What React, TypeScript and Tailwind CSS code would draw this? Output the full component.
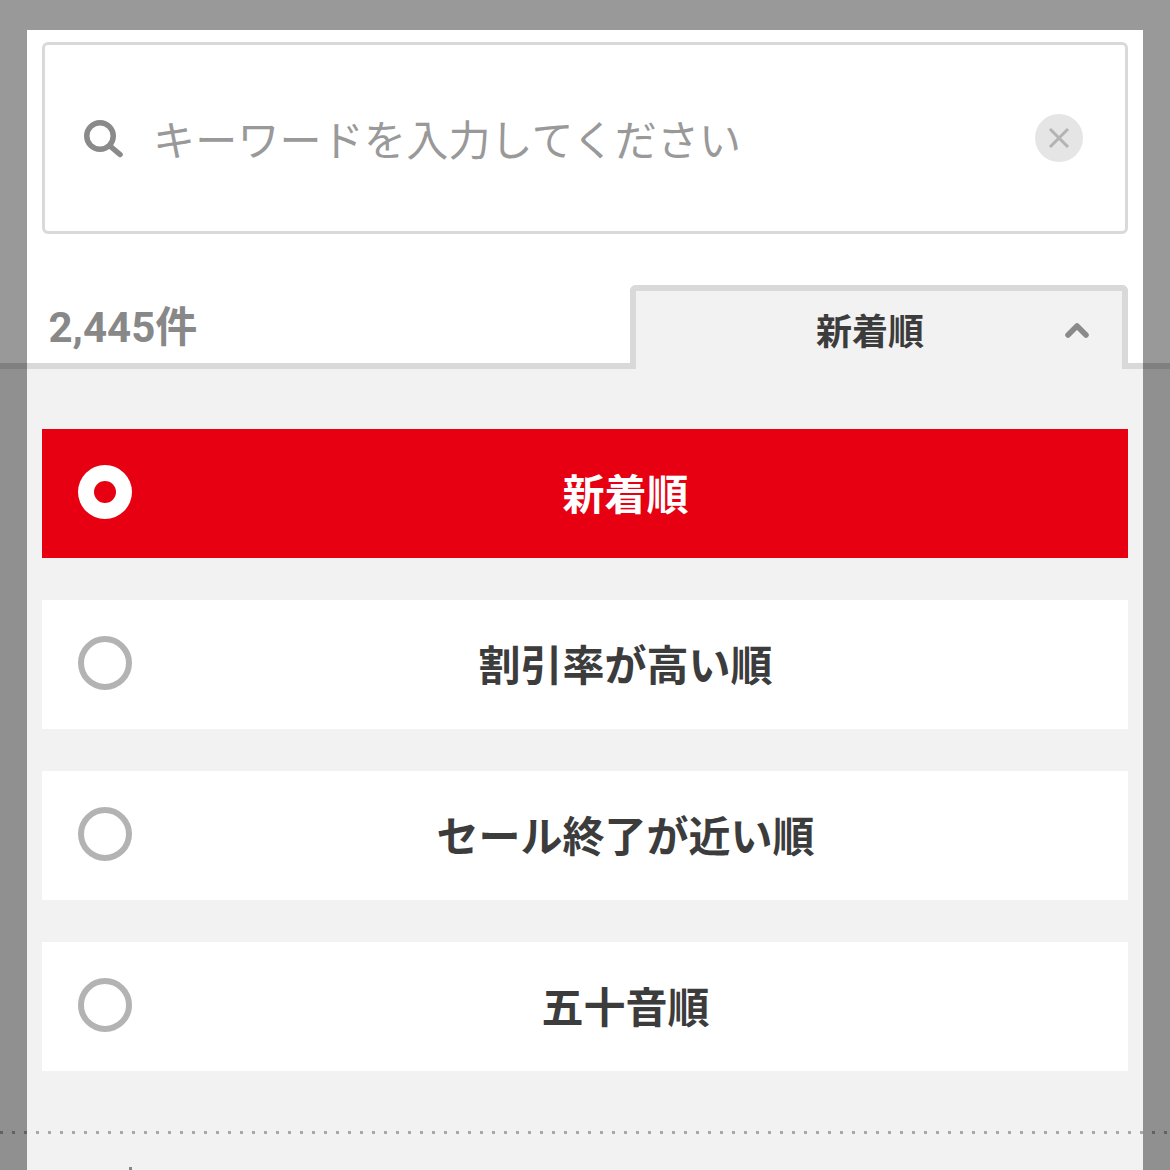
import React from 'react';

const FONT = "font-['Roboto','Noto_Sans_CJK_JP',sans-serif]";

const options = [
  { label: '新着順', selected: true },
  { label: '割引率が高い順', selected: false },
  { label: 'セール終了が近い順', selected: false },
  { label: '五十音順', selected: false },
];

const SearchIcon = () => (
  <svg width="40" height="40" viewBox="0 0 40 40" fill="none" className="shrink-0">
    <circle cx="16" cy="18" r="13.25" stroke="#8a8a8a" strokeWidth="5.5" />
    <path d="M26 28 L36 36.5" stroke="#8a8a8a" strokeWidth="5.5" strokeLinecap="round" />
  </svg>
);

const Radio = ({ selected }: { selected: boolean }) =>
  selected ? (
    <div className="w-[54px] h-[54px] rounded-full bg-white flex items-center justify-center shrink-0 ml-[36px] mr-[-10px] mt-[36px]">
      <div className="w-[22px] h-[22px] rounded-full bg-[#e60012]" />
    </div>
  ) : (
    <div className="w-[54px] h-[54px] rounded-full border-[6px] border-[#b3b3b3] bg-white shrink-0 ml-[36px] mr-[-10px] mt-[36px]" />
  );

export default function App() {
  return (
    <div className={`relative w-[1170px] h-[1170px] overflow-hidden pt-[30px] px-[27px] ${FONT}`}>
      {/* page behind the overlay */}
      <div className="absolute inset-0 flex flex-col">
        <div className="h-[363px] bg-[#999999]" />
        <div className="h-[6px] bg-[#808080]" />
        <div className="flex-1 bg-[#909090]" />
      </div>
      <div className="absolute left-0 right-0 top-[1131px] h-[3px] bg-[linear-gradient(90deg,#626262_3px,transparent_3px)] bg-size-[12px_3px]" />

      <div className="relative w-[1116px] h-[1140px] overflow-hidden bg-[#f2f2f2]">
        <div className="bg-white px-[15px] pt-[12px]">
          <div className="h-[192px] border-[3px] border-[#d9d9d9] rounded-[6px] flex items-center pl-[39px] pr-[42px]">
            <SearchIcon />
            <div className="ml-[29px] flex-1 text-[42px] leading-[60px] tracking-[0.2px] text-[#999999] pt-[8px]">キーワードを入力してください</div>
            <div className="w-[48px] h-[48px] rounded-full bg-[#e5e5e5] flex items-center justify-center">
              <svg width="22" height="22" viewBox="0 0 22 22" fill="none">
                <path d="M2 2 L20 20 M20 2 L2 20" stroke="#b3b3b3" strokeWidth="3" />
              </svg>
            </div>
          </div>
        </div>

        <div className="bg-white h-[135px] border-b-[6px] border-[#d9d9d9] pl-[21.5px] pr-[15px] flex justify-between items-end">
          <div className="text-[42px] leading-[60px] font-bold text-[#888888] mb-[5px]">2,445件</div>
          <div className="relative w-[498px] h-[84px] mb-[-6px] bg-[#f2f2f2] border-x-[6px] border-t-[6px] border-[#d9d9d9] rounded-t-[6px] flex items-center justify-center">
            <span className="text-[36px] leading-[48px] font-bold text-[#3c3c3c] mr-[18px] mt-[6px]">新着順</span>
            <svg width="26" height="20" viewBox="0 0 26 20" fill="none" className="absolute right-[32px] top-[29px]">
              <path d="M4 15 L13 6 L22 15" stroke="#8a8a8a" strokeWidth="5.5" strokeLinecap="round" strokeLinejoin="round" />
            </svg>
          </div>
        </div>

        <div className="px-[15px] pt-[60px] flex flex-col gap-[42px]">
          {options.map((o) => (
            <div key={o.label} className={`h-[129px] flex ${o.selected ? 'bg-[#e60012]' : 'bg-white'}`}>
              <Radio selected={o.selected} />
              <div className={`flex-1 flex items-center justify-center text-[42px] font-bold pt-[4px] pl-[1px] ${o.selected ? 'text-white' : 'text-[#3c3c3c]'}`}>
                {o.label}
              </div>
            </div>
          ))}
        </div>

        <div className="mt-[60px] h-[3px] bg-[linear-gradient(90deg,#a8a8a8_3px,transparent_3px)] bg-size-[12px_3px] bg-position-[9px_0]" />
        <div className="mt-[33px] ml-[102px] w-[3px] h-[3px] bg-[#888888]" />
      </div>
    </div>
  );
}
